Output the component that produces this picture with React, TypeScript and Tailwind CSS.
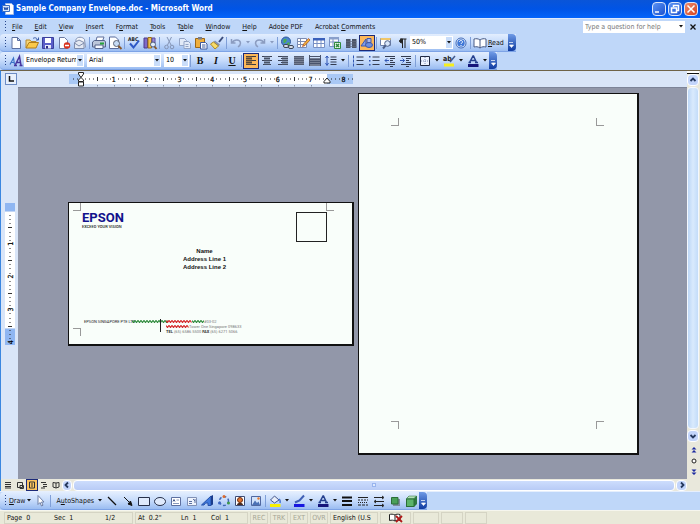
import React from 'react';

const glyphs: Record<string, React.ReactNode> = {
  new: <path d="M4 2.500h5.500l3 3v8H4z M9.500 2.500v3h3" fill="#fff" stroke="#5d70a0" />,
  open: (
    <>
      <path d="M2 13V5h4l1 1.500h5V8" fill="#f6d67a" stroke="#b98a2c" />
      <path d="M2 13l3-5.500h9.500L12 13z" fill="#fbc94a" stroke="#b07d1c" />
      <path d="M9 3.500c2-1.500 4-.5 4.500 1.500M12 5h2.500V2.500" fill="none" stroke="#3c5da8" />
    </>
  ),
  save: (
    <>
      <path d="M2.500 2.500h11v11h-11z" fill="#5a5fc8" stroke="#3a3f9c" />
      <path d="M5 3h6v5H5z" fill="#fff" />
      <path d="M5 10h6v3.500H5z" fill="#e7e9f8" />
      <path d="M6 11h2v2.500H6z" fill="#2a2f86" />
    </>
  ),
  permission: (
    <>
      <path d="M3.500 2.500h5l3 3v8h-8z" fill="#fff" stroke="#6c7ba5" />
      <circle cx="11" cy="10.500" r="3.200" fill="#d9321d" />
      <path d="M9 10.500h4" stroke="#fff" strokeWidth="1.500" />
    </>
  ),
  mail: (
    <>
      <path d="M4 7V4.500c1-3 7-3 8.500 0l1 8" fill="#f4f6fb" stroke="#8593b2" />
      <path d="M2.500 7.500l4.500-2.500 5 2.500v6H2.500z" fill="#e3e8f2" stroke="#7e8cac" />
      <path d="M2.500 8l4.500 3L12 8" fill="none" stroke="#7e8cac" />
    </>
  ),
  print: (
    <>
      <path d="M5 6l1-4h7l-1.500 4" fill="#fff" stroke="#60709c" />
      <path d="M1.500 7l2-1.500h10L14.500 7v5H1.500z" fill="#bcc6da" stroke="#55638a" />
      <path d="M4 10h8v3.500H4z" fill="#f4f7ff" stroke="#55638a" />
      <path d="M9 8.500h4" stroke="#28a53b" strokeWidth="2" />
    </>
  ),
  preview: (
    <>
      <path d="M2.500 2h6l3 3v8.500h-9z" fill="#fff" stroke="#5b6c9c" />
      <circle cx="9.500" cy="8.500" r="3" fill="#c7dcf6" stroke="#5d6474" />
      <path d="M11.500 11l3 3" stroke="#8a5a2c" strokeWidth="2" />
    </>
  ),
  spelling: (
    <>
      <text x="2" y="5.500" fontSize="5" fontWeight="bold" fill="#222">ABC</text>
      <path d="M4 8.500l3.500 4 5.500-7" fill="none" stroke="#2d58c6" strokeWidth="2" />
    </>
  ),
  research: (
    <>
      <path d="M2 3h3.500v10H2z" fill="#7f6ac8" stroke="#4a3b8c" />
      <path d="M6 2.500h3.500V13H6z" fill="#f2c14a" stroke="#9c6f1c" />
      <path d="M10 3h3v5h-3z" fill="#9a8ad8" stroke="#5a4b9c" />
      <circle cx="11" cy="9.500" r="2.500" fill="#e0ecfb" stroke="#4d5c7c" />
      <path d="M12.500 11.500l2 2.500" stroke="#8a5a2c" strokeWidth="2" />
    </>
  ),
  cut: (
    <g stroke="#8494b5" fill="none">
      <path d="M6 2l4 8M10.500 2l-4 8" />
      <circle cx="5.500" cy="12" r="1.800" />
      <circle cx="11" cy="12" r="1.800" />
    </g>
  ),
  copy: (
    <g stroke="#93a4c6" fill="#e2eaf8">
      <path d="M2.500 3.500h5l2 2v5h-7z" />
      <path d="M7 6.500h4.500l2 2v5H7z M8.500 9.500h3M8.500 11.500h3" />
    </g>
  ),
  paste: (
    <>
      <path d="M2.500 3.500h9v9h-9z" fill="#efae3c" stroke="#9a6616" />
      <path d="M5 2h4v2.500H5z" fill="#777f90" />
      <path d="M7.500 7.500h5l1.500 1.500v5H7.500z" fill="#fff" stroke="#3f5a9e" />
      <path d="M9 10h3.500M9 12h3.500" stroke="#3f5a9e" />
    </>
  ),
  brush: (
    <>
      <path d="M14 2l-4 5" stroke="#3b4d7c" strokeWidth="2" />
      <path d="M6 5.500l5 4-1.500 2-5.500-4z" fill="#8491b0" />
      <path d="M4.500 7l5 4L6 14 1.500 9z" fill="#f7dc6a" stroke="#b08c25" />
    </>
  ),
  undo: <path d="M3.500 4v4h4M4 8c2-4 8-4 8.500 0 0 2-1 3-2.500 4" fill="none" stroke="#8b9cc0" strokeWidth="1.500" />,
  redo: <path d="M12.500 4v4h-4M12 8c-2-4-8-4-8.500 0 0 2 1 3 2.500 4" fill="none" stroke="#8b9cc0" strokeWidth="1.500" />,
  link: (
    <>
      <circle cx="7" cy="6.500" r="4.500" fill="#4b86cf" stroke="#2f5a9c" />
      <path d="M4.500 4.500c2-2 4 0 3 1.500s-1 2-3 2zM8 8l2.500-1v3L8 11z" fill="#4cae50" />
      <rect x="4.500" y="9.500" width="5" height="3" rx="1.500" fill="#d5dbe6" stroke="#3c4657" />
      <rect x="9.500" y="10.500" width="5" height="3" rx="1.500" fill="#d5dbe6" stroke="#3c4657" />
    </>
  ),
  borders: (
    <>
      <path d="M2.500 3.500h9v9h-9z M2.500 6.500h9M2.500 9.500h9M5.500 3.500v9" fill="#fff" stroke="#7d8cb2" />
      <path d="M13.500 3.500l-5 5.500-1 2.500 2.500-1L15 5z" fill="#f0b53c" stroke="#a8421c" strokeWidth=".7" />
    </>
  ),
  table: (
    <>
      <path d="M2.500 3.500h11v9h-11z M6 5v7.500M10 5v7.500M2.500 8.500h11" fill="#fff" stroke="#7890c4" />
      <path d="M2 3h12v2.500H2z" fill="#3a60bb" />
    </>
  ),
  excel: (
    <>
      <path d="M2.500 2.500h9v9h-9z M2.500 7h9M6 4v7" fill="#fff" stroke="#7890c4" />
      <path d="M2 2h10v2.500H2z" fill="#8aa0cb" />
      <path d="M7.500 7.500h6v6h-6z" fill="#e5f4e6" stroke="#2f8a3c" />
      <path d="M9 9l3 3M12 9l-3 3" stroke="#2f8a3c" strokeWidth="1.500" />
    </>
  ),
  columns: (
    <>
      <path d="M3 4h4.500v9H3zM9 4h4.500v9H9z" fill="#4d5567" />
      <path d="M3 6.500h10.500M3 9h10.500M3 11.500h10.500" stroke="#666e81" strokeWidth=".7" />
    </>
  ),
  drawing: (
    <>
      <path d="M2 11l5-7v7z" fill="#7f9ce8" stroke="#3f57ab" />
      <path d="M8 3.500h4v4H8z" fill="#aab8e8" stroke="#3f57ab" />
      <ellipse cx="10" cy="10" rx="3.500" ry="2.500" fill="#6d8fe0" stroke="#3f57ab" />
    </>
  ),
  map: (
    <>
      <path d="M2.500 3.500h10v7h-10z" fill="#fff" stroke="#6d80ab" />
      <path d="M2.500 3h10v2h-10z" fill="#f0c668" />
      <circle cx="9.500" cy="8.500" r="2.800" fill="#d8e6fa" stroke="#4d5f88" />
      <path d="M7.500 10.500L5 13.500" stroke="#4d5f88" strokeWidth="2" />
    </>
  ),
  pilcrow: <path d="M6 4h6.500M8.500 4v9M11 4v9M8.500 4c-4 0-4 4 0 4z" fill="#222" stroke="#222" />,
  help: (
    <>
      <circle cx="8" cy="8" r="5" fill="#fff" stroke="#3a66b8" />
      <circle cx="8" cy="8" r="3.800" fill="#3f78d8" />
      <path d="M6.500 7c0-2 3-2 3 0 0 1-1.500 1-1.500 2M8 10v1" fill="none" stroke="#fff" />
    </>
  ),
  book: <path d="M8 5C6 3.500 4 3.500 2 4v8c2-.5 4-.5 6 1 2-1.500 4-1.500 6-1V4c-2-.5-4-.5-6 1v8" fill="#fff" stroke="#485a85" />,
  styles: (
    <>
      <path d="M2 11.500L5.500 5l1 6.500M3.500 9.500h3" fill="none" stroke="#3a72c8" strokeWidth="1.200" />
      <path d="M7 12.500L11.500 3.500l1.500 9M8.500 9.500h4M6 12.500h3M11.500 12.500h3" fill="none" stroke="#46359e" strokeWidth="1.500" />
    </>
  ),
  left: (
    <>
      <path d="M3 3.500h10M3 5.500h6M3 7.500h10M3 9.500h6M3 11.500h10" stroke="#3b3b42" />
      <path d="M3 3h6v9H3z" fill="#6d5337" fillOpacity=".6" />
    </>
  ),
  center: (
    <>
      <path d="M3 3.500h10M5 5.500h6M3 7.500h10M5 9.500h6M4 11.500h8" stroke="#3b4358" />
      <path d="M5 3h6v9H5z" fill="#566074" fillOpacity=".55" />
    </>
  ),
  right: (
    <>
      <path d="M3 3.500h10M6 5.500h7M3 7.500h10M6 9.500h7M3 11.500h10" stroke="#3b4358" />
      <path d="M7 3h6v9H7z" fill="#566074" fillOpacity=".55" />
    </>
  ),
  justify: (
    <>
      <path d="M3 3h10v9H3z" fill="#767f93" />
      <path d="M3 3.500h10M3 5.500h10M3 7.500h10M3 9.500h10M3 11.500h10" stroke="#545d72" />
    </>
  ),
  distribute: (
    <>
      <path d="M3 5h10v8H3z" fill="#767f93" />
      <path d="M2.500 2v11M13.500 2v11M3 3.500h10M3 6.500h10M3 8.500h10M3 10.500h10" stroke="#4a546c" />
    </>
  ),
  spacing: (
    <>
      <path d="M7.500 4h6M7.500 6.500h6M7.500 9h6M7.500 11.500h6" stroke="#333b50" />
      <path d="M4 3v9M2.500 5L4 3l1.500 2M2.500 10L4 12.500 5.500 10" fill="none" stroke="#3157b5" />
    </>
  ),
  numbers: (
    <>
      <path d="M6.500 4h7M6.500 7.500h7M6.500 11.500h7" stroke="#333b50" />
      <path d="M3.500 2.500v3M3.500 6.500v3M3.500 10.500v3" fill="none" stroke="#3157b5" />
    </>
  ),
  bullets: (
    <>
      <path d="M6.500 4h7M6.500 7.500h7M6.500 11.500h7" stroke="#333b50" />
      <path d="M3 3h1.500v1.500H3zM3 7h1.500v1.500H3zM3 11h1.500v1.500H3z" fill="#3157b5" />
    </>
  ),
  outdent: (
    <>
      <path d="M3 3.500h10M8 5.500h5M8 7.500h3M8 9.500h5M3 11.500h10M8 13.500h3" stroke="#333b50" />
      <path d="M7 7.500H3M5 5.500l-2 2 2 2" fill="none" stroke="#3157b5" />
    </>
  ),
  indent: (
    <>
      <path d="M3 3.500h10M8 5.500h5M8 7.500h3M8 9.500h5M3 11.500h10M8 13.500h3" stroke="#333b50" />
      <path d="M2 7.500h4.500M4.500 5.500l2 2-2 2" fill="none" stroke="#3157b5" />
    </>
  ),
  outside: (
    <>
      <path d="M3.500 3.500h9v9h-9z" fill="#eef4ff" stroke="#222b44" />
      <path d="M8 4v8M4 8h8" stroke="#7c8cb4" strokeDasharray="1 1" />
    </>
  ),
  highlight: (
    <>
      <text x="2" y="8" fontSize="7" fontWeight="bold" fill="#222">ab</text>
      <path d="M14 3l-5 6" stroke="#44598c" strokeWidth="1.500" />
      <path d="M3 10.500h10v3H3z" fill="#f6ee1d" />
    </>
  ),
  fontcolor: (
    <>
      <path d="M4.500 9.500L8 3h.5L11.500 9.500M6 7.500h4M3.500 9.500h2.500M10 9.500h3" fill="none" stroke="#26418f" strokeWidth="1.500" />
      <path d="M3 11h10.500v3H3z" fill="#15157a" />
    </>
  ),
  pointer: <path d="M5 2.500v9l2-2 1.500 3.500 1.500-.8L8.500 9H11z" fill="#fff" stroke="#6f80a6" />,
  line: <path d="M4 4l8 8" stroke="#111" strokeWidth="1.200" />,
  arrow: <path d="M4 4l5 5M12 12.500L8 11l2.500-3z" fill="#111" stroke="#111" />,
  rect: <path d="M2.500 4.500h11v8h-11z" fill="#dfeafc" stroke="#27304a" />,
  oval: <ellipse cx="8" cy="8.500" rx="5.500" ry="4" fill="#dfeafc" stroke="#27304a" />,
  textbox: (
    <>
      <path d="M3.500 4.500h9v8h-9z" fill="#fff" stroke="#5d70a0" />
      <path d="M5 8.500l1-2 1 2" fill="none" stroke="#44598c" />
      <path d="M8.500 7h2.500M5 10.500h6" stroke="#8797bb" />
    </>
  ),
  vtext: (
    <>
      <path d="M3.500 4.500h9v8h-9z" fill="#eef3fc" stroke="#8090b4" />
      <path d="M5 10.500h3M5 8.500h3M9 6l2 2M11 6v4" stroke="#5d70a0" />
    </>
  ),
  wordart: (
    <>
      <path d="M1.500 12L11 3v9.500H8V10H5.500L4 12z" fill="#3f79dd" stroke="#2450a8" />
      <path d="M11 3l2-1v9.500l-2 1z" fill="#1b3d8c" />
    </>
  ),
  diagram: (
    <>
      <circle cx="8" cy="8" r="4.500" fill="none" stroke="#4268b4" strokeWidth="1.500" strokeDasharray="3 2" />
      <circle cx="8" cy="3.500" r="1.500" fill="#de6b2c" />
      <circle cx="3.500" cy="10" r="1.500" fill="#3f66c2" />
      <circle cx="12.500" cy="10" r="1.500" fill="#3f9a4a" />
    </>
  ),
  clipart: (
    <>
      <path d="M3.500 3.500h9v9h-9z" fill="#fff" stroke="#3c4b74" />
      <circle cx="8" cy="7" r="2.500" fill="#e2742e" stroke="#6e2d14" />
      <path d="M5 12c0-3 6-3 6 0z" fill="#4a2c22" />
    </>
  ),
  picture: (
    <>
      <path d="M3.500 3.500h9v9h-9z" fill="#d2e3fb" stroke="#5068a0" />
      <path d="M4 12l3-4.500 2 2.500 1.500-1.500L12 12z" fill="#4c72b6" />
      <circle cx="10.500" cy="5.500" r="1.200" fill="#e87d30" />
    </>
  ),
  fill: (
    <>
      <path d="M3.500 7l4-4L12 7l-4.500 3z" fill="#e7edf8" stroke="#46588c" />
      <path d="M12 6c1.500 1 1.500 2 1 4" fill="none" stroke="#4878d2" strokeWidth="1.500" />
      <path d="M3 11h10.500v3H3z" fill="#f8f000" />
    </>
  ),
  stroke: (
    <>
      <path d="M13 2.500L8.500 7.500 4 9.500" fill="none" stroke="#3f5fb5" strokeWidth="2" />
      <path d="M3 11h10.500v3H3z" fill="#1616e0" />
    </>
  ),
  weight: <path d="M3 4.500h10M3 8h10M3 12h10" stroke="#111" strokeWidth="2" />,
  dash: (
    <g stroke="#222">
      <path d="M3 4.500h10" />
      <path d="M3 7h10" strokeDasharray="2 1" />
      <path d="M3 9.500h10" strokeDasharray="1 1" />
      <path d="M3 12h10" strokeDasharray="3 1" />
    </g>
  ),
  arrows: <path d="M3 4.500h9M4 8.500h9M3 12.500h9M11 3l2 1.500L11 6M5 7L3 8.500 5 10M11 11l2 1.500-2 1.500" fill="none" stroke="#222" />,
  shadow: (
    <>
      <path d="M6 6h7v7H6z" fill="#7e8ba0" />
      <path d="M4.500 4.500h6.500v6.500H4.500z" fill="#4aa05a" stroke="#2a6e38" />
    </>
  ),
  cube: (
    <>
      <path d="M3 6l3-3h8v8l-3 3H3z" fill="#2f7a40" />
      <path d="M3.500 6h7.500v7.500H3.500z" fill="#5cb46b" stroke="#2a6e38" />
      <path d="M3.500 5.500L6 3h7.500L11 5.500z" fill="#b2e0b8" stroke="#2a6e38" strokeWidth=".5" />
    </>
  ),
};

function Icon({ name }: { name: string }) {
  return (
    <svg viewBox="0 0 16 16" className="w-4 h-4 shrink-0" fill="none" aria-hidden="true">
      {glyphs[name]}
    </svg>
  );
}

function Tool({ name, active }: { name: string; active?: boolean }) {
  return (
    <button
      aria-label={name}
      className={
        active
          ? 'w-4 h-4 shrink-0 bg-[#fdb859] outline outline-1 -outline-offset-1 outline-[#1c2a78]'
          : 'w-4 h-4 shrink-0 hover:bg-[#ffe7b0]'
      }
    >
      <Icon name={name} />
    </button>
  );
}

function Caret({ label, dim }: { label: string; dim?: boolean }) {
  return (
    <button aria-label={label} className="w-2 h-4 shrink-0 flex items-center justify-center">
      <svg viewBox="0 0 4 3" className="w-1 h-[3px]" aria-hidden="true">
        <path d="M0 0h4L2 2.500z" fill={dim ? '#8b9cc0' : '#111'} />
      </svg>
    </button>
  );
}

const Sep = () => <span className="w-px h-3 mx-px shrink-0 bg-[#7f9fd8]" />;

const Grip = () => (
  <span className="w-px h-3 ml-[5px] mr-[2px] shrink-0 bg-[repeating-linear-gradient(#27458a_0_1px,transparent_1px_3px)]" />
);

function Cap({ label }: { label: string }) {
  return (
    <button
      aria-label={label}
      className="self-stretch w-2 shrink-0 rounded-r-sm bg-linear-to-b from-[#6f9ae6] to-[#0f3aa0] flex items-end justify-center pb-[3px]"
    >
      <svg viewBox="0 0 5 6" className="w-[5px] h-[6px]" aria-hidden="true">
        <path d="M0 .5h4M.5 3h4L2.500 5.500z" fill="#fff" stroke="#fff" strokeWidth=".7" />
      </svg>
    </button>
  );
}

function Combo({ label, options, className }: { label: string; options: string[]; className: string }) {
  return (
    <div className={`relative h-[13px] shrink-0 bg-white ${className}`}>
      <select aria-label={label} className="appearance-none w-full h-full pl-[2px] pr-2 text-[7px] leading-[13px] text-black bg-transparent block">
        {options.map((o) => (
          <option key={o}>{o}</option>
        ))}
      </select>
      <span className="absolute right-px top-px bottom-px w-[6px] bg-[#c9ddfa] flex items-center justify-center pointer-events-none">
        <svg viewBox="0 0 4 3" className="w-1 h-[3px]" aria-hidden="true">
          <path d="M0 0h4L2 2.500z" fill="#111" />
        </svg>
      </span>
    </div>
  );
}

const menus = [
  ['', 'F', 'ile'], ['', 'E', 'dit'], ['', 'V', 'iew'], ['', 'I', 'nsert'], ['F', 'o', 'rmat'], ['', 'T', 'ools'],
  ['T', 'a', 'ble'], ['', 'W', 'indow'], ['', 'H', 'elp'], ['Ado', 'b', 'e PDF'], ['Acrobat ', 'C', 'omments'],
];

const bar = 'flex items-center rounded-l-sm border-b border-[#7da3e6] bg-linear-to-b from-[#e3eefe] via-[#c6dbfb] to-[#9bbdf1]';

function HorizontalRuler() {
  const eighths = Array.from({ length: 69 }, (_, i) => i - 2);
  return (
    <svg viewBox="0 0 284 16" className="w-[284px] h-4 shrink-0" aria-hidden="true">
      <path d="M0 3h284v10H0z" fill="#a9c8f5" />
      <path d="M12 3h246v10H12z" fill="#fff" />
      {eighths.map((i) => {
        const x = 12 + i * 4.1;
        if (i === 0 || i === 60) return null;
        if (i > 0 && i % 8 === 0) {
          return (
            <text key={i} x={x} y="10.500" fontSize="7" textAnchor="middle" fill="#000" stroke="#000" strokeWidth=".2">
              {i / 8}
            </text>
          );
        }
        if (i > 0 && i % 4 === 0) return <path key={i} d={`M${Math.round(x) + 0.5} 6v4`} stroke="#333" />;
        return <path key={i} d={`M${Math.round(x)} 8h1`} stroke="#222" />;
      })}
      {Array.from({ length: 14 }, (_, i) => (
        <path key={i} d={`M${Math.round(28.4 + i * 16.4) + 0.5} 14v1.500`} stroke="#8a94a8" />
      ))}
      <path d="M9.500 1.500h5v1.500L12 6.500 9.500 3zM12 6.500l2.500 2.500v1.500h-5V9zM9.500 11h5v4h-5z" fill="#fff" stroke="#222" />
      <path d="M258 7l3 3.500v1.500h-6v-1.500z" fill="#fff" stroke="#222" />
    </svg>
  );
}

function VerticalRuler() {
  return (
    <svg viewBox="0 0 10 142" className="w-[10px] h-[142px]" aria-hidden="true">
      <path d="M0 0h10v142H0z" fill="#8fb6f2" />
      <path d="M0 8h10v117H0z" fill="#fff" />
      {Array.from({ length: 33 }, (_, k) => {
        const i = k + 1;
        const y = 8 + i * 4.1;
        if (i % 8 === 0) {
          return (
            <text key={i} transform={`translate(7.500 ${y}) rotate(-90)`} fontSize="7" textAnchor="middle" fill="#000" stroke="#000" strokeWidth=".2">
              {i / 8}
            </text>
          );
        }
        if (i % 4 === 0) return <path key={i} d={`M3 ${Math.round(y) + 0.5}h4`} stroke="#333" />;
        return <path key={i} d={`M5 ${Math.round(y)}v1`} stroke="#222" />;
      })}
      <path d="M0 8.500h10M0 125.500h10" stroke="#c3d6f4" />
    </svg>
  );
}

function Squiggle({ width, color }: { width: number; color: string }) {
  const points = Array.from({ length: Math.floor(width / 1.5) + 1 }, (_, i) => `${i * 1.5},${i % 2 ? 2.5 : 0.5}`).join(' ');
  return (
    <svg viewBox={`0 0 ${width} 3`} style={{ width }} className="h-[3px] shrink-0" aria-hidden="true">
      <polyline points={points} fill="none" stroke={color} strokeWidth="1.200" />
    </svg>
  );
}

function Envelope() {
  return (
    <section className="relative w-[286px] h-[144px] bg-[#f9fefa] border border-r-2 border-b-2 border-[#111] px-[13px] pt-2 flex flex-col font-['Roboto',sans-serif]">
      <span className="absolute left-1 top-0 w-2 h-2 border-r border-b border-[#999]" />
      <span className="absolute right-[18px] top-0 w-2 h-2 border-l border-b border-[#999]" />
      <span className="absolute left-1 bottom-2 w-2 h-2 border-r border-t border-[#999]" />
      <span className="absolute right-[25px] top-[9px] w-[31px] h-[30px] border border-[#222]" />
      <h1 className="text-[13px] leading-[14px] font-bold text-[#12128c]">EPSON</h1>
      <p className="text-[4px] leading-[4px] font-medium text-[#222]">EXCEED YOUR VISION</p>
      <address className="not-italic mt-[18px] pr-3 text-center font-['Liberation_Sans',sans-serif] text-[6px] leading-[8px] font-bold text-[#111]">
        Name<br />Address Line 1<br />Address Line 2
      </address>
      <footer className="mt-12 pl-[2px] flex items-start text-[4px] leading-[5px] text-[#777]">
        <span className="w-12 whitespace-nowrap text-[#222]">EPSON SINGAPORE PTE LTD</span>
        <span className="w-7 pt-px">
          <Squiggle width={36} color="#2f8a3c" />
        </span>
        <span className="w-px h-[13px] bg-[#222]" />
        <div className="pl-[5px] whitespace-nowrap">
          <div className="flex items-center">
            <Squiggle width={26} color="#d42a2a" />
            <Squiggle width={12} color="#2f8a3c" />
            #03-02
          </div>
          <div className="flex items-center">
            <Squiggle width={23} color="#d42a2a" />
            Tower One Singapore 098633
          </div>
          <div><b className="text-[#333]">TEL</b> (65) 6586 5500 <b className="text-[#333]">FAX</b> (65) 6271 5066</div>
        </div>
      </footer>
    </section>
  );
}

function LetterPage() {
  return (
    <section className="w-[281px] h-[362px] bg-[#f9fefa] border border-r-2 border-b-2 border-[#111] pl-8 pr-[33px] py-6 flex flex-col justify-between">
      <div className="flex justify-between">
        <span className="w-2 h-2 border-r border-b border-[#999]" />
        <span className="w-2 h-2 border-l border-b border-[#999]" />
      </div>
      <div className="flex justify-between">
        <span className="w-2 h-2 border-r border-t border-[#999]" />
        <span className="w-2 h-2 border-l border-t border-[#999]" />
      </div>
    </section>
  );
}

function ScrollButton({ label, d, className }: { label: string; d: string; className: string }) {
  return (
    <button aria-label={label} className={`shrink-0 rounded-sm border border-white bg-[#c3d5fb] flex items-center justify-center ${className}`}>
      <svg viewBox="0 0 8 8" className="w-2 h-2" aria-hidden="true">
        <path d={d} fill="none" stroke="#26395e" strokeWidth="1.800" />
      </svg>
    </button>
  );
}

function BrowseButton({ label, children }: { label: string; children: React.ReactNode }) {
  return (
    <button aria-label={label} className="h-[11px] w-full flex items-center justify-center">
      <svg viewBox="0 0 6 6" className="w-[6px] h-[6px]" aria-hidden="true">{children}</svg>
    </button>
  );
}

const views = [
  { label: 'Normal', d: 'M1 1.500h6M1 3.500h6M1 5.500h6M1 7h6' },
  { label: 'Web Layout', d: 'M1.500 1.500h5v5h-5zM4 4.500h3.500v3H4z' },
  { label: 'Print Layout', d: 'M1.500 1h5v6h-5zM3 3h2M3 5h2' },
  { label: 'Outline', d: 'M1 1.500h5M3 3.500h4M3 5.500h4M1 7h4' },
  { label: 'Reading', d: 'M4 2L1 1.500v4.500L4 7l3-1V1.500zM4 2v5' },
];

function WindowButton({ label, d, className }: { label: string; d: string; className: string }) {
  return (
    <button aria-label={label} className={`w-[14px] h-[14px] rounded-sm border border-[#dbe6fb] bg-linear-to-br ${className}`}>
      <svg viewBox="0 0 12 12" className="w-3 h-3" aria-hidden="true">
        <path d={d} fill="none" stroke="#fff" strokeWidth="1.500" />
      </svg>
    </button>
  );
}

export default function App() {
  return (
    <div className="h-screen flex flex-col overflow-hidden bg-[#bfd7f9] font-['DejaVu_Sans_Condensed','DejaVu_Sans',sans-serif] text-[7px] leading-[10px] text-[#111]">
      <header className="h-[18px] shrink-0 flex items-center pl-[2px] pr-[2px] bg-linear-to-b from-[#0a55d8] via-[#0054e6] to-[#0464fb]">
        <svg viewBox="0 0 12 12" className="w-3 h-3 mr-[2px]" aria-hidden="true">
          <path d="M3.500.5h6l2 2v9h-8z" fill="#fff" stroke="#9fb8e6" />
          <path d="M.5 2.500h7v6h-7z" fill="#dce9fc" stroke="#3b6fc4" />
          <path d="M2 4l1 3 1-2.500L5 7l1-3" fill="none" stroke="#2450a8" />
        </svg>
        <h1 className="flex-1 text-[8px] font-bold text-white whitespace-nowrap">
          Sample Company Envelope.doc - Microsoft Word
        </h1>
        <div className="flex gap-[2px]">
          <WindowButton label="Minimize" d="M2 9h4" className="from-[#5b93f5] to-[#1c50cf]" />
          <WindowButton label="Restore" d="M4.500 4V2.500h5v5H8M2.500 5h5v4.500h-5z" className="from-[#5b93f5] to-[#1c50cf]" />
          <WindowButton label="Close" d="M2.500 2.500l7 7M9.500 2.500l-7 7" className="from-[#f08a6a] to-[#d4401c]" />
        </div>
      </header>

      <nav className="h-4 shrink-0 flex items-center border-t border-[#dfeafc]">
        <Grip />
        <div className="flex-1 flex gap-3 pl-1 whitespace-nowrap">
          {menus.map(([a, b, c]) => (
            <button key={a + b + c}>{a}<u>{b}</u>{c}</button>
          ))}
        </div>
        <div className="flex items-center bg-white h-3 w-[102px]">
          <input aria-label="Type a question for help" placeholder="Type a question for help" className="w-full min-w-0 pl-[2px] placeholder:text-[#777] outline-none" />
          <Caret label="Help history" />
        </div>
        <button aria-label="Close document" className="w-[15px] flex justify-center">
          <svg viewBox="0 0 6 6" className="w-[6px] h-[6px]" aria-hidden="true">
            <path d="M.5.5l5 5M5.500.5l-5 5" stroke="#111" strokeWidth="1.300" />
          </svg>
        </button>
      </nav>

      <div className="h-[18px] shrink-0 flex">
        <div className={bar}>
          <Grip />
          {['new', 'open', 'save', 'permission', 'mail'].map((n) => <Tool key={n} name={n} />)}
          <Sep />
          <Tool name="print" />
          <Tool name="preview" />
          <Sep />
          <Tool name="spelling" />
          <Tool name="research" />
          <Sep />
          {['cut', 'copy', 'paste', 'brush'].map((n) => <Tool key={n} name={n} />)}
          <Sep />
          <Tool name="undo" />
          <Caret label="Undo list" dim />
          <Tool name="redo" />
          <Caret label="Redo list" dim />
          <Sep />
          {['link', 'borders', 'table', 'excel', 'columns'].map((n) => <Tool key={n} name={n} />)}
          <Tool name="drawing" active />
          <Sep />
          <Tool name="map" />
          <Tool name="pilcrow" />
          <Combo label="Zoom" options={['50%', '75%', '100%']} className="w-[43px]" />
          <Tool name="help" />
          <Sep />
          <button className="flex items-center pr-1">
            <Icon name="book" />
            <span><u>R</u>ead</span>
          </button>
          <Cap label="Standard toolbar options" />
        </div>
      </div>

      <div className="h-[18px] shrink-0 flex">
        <div className={bar}>
          <Grip />
          <Tool name="styles" />
          <Combo label="Style" options={['Envelope Return', 'Normal']} className="w-[60px] mr-[3px]" />
          <Combo label="Font" options={['Arial', 'Times New Roman']} className="w-[74px] mr-[3px]" />
          <Combo label="Font size" options={['10', '12', '14']} className="w-[25px]" />
          <Sep />
          <button className="w-4 font-['Liberation_Serif',serif] text-[10px] font-bold">B</button>
          <button className="w-4 font-['Liberation_Serif',serif] text-[10px] font-bold italic">I</button>
          <button className="w-4 font-['Liberation_Serif',serif] text-[10px] font-bold underline">U</button>
          <Sep />
          <Tool name="left" active />
          {['center', 'right', 'justify', 'distribute', 'spacing'].map((n) => <Tool key={n} name={n} />)}
          <Caret label="Line spacing list" />
          <Sep />
          {['numbers', 'bullets', 'outdent', 'indent'].map((n) => <Tool key={n} name={n} />)}
          <Sep />
          <Tool name="outside" />
          <Caret label="Border list" />
          <Tool name="highlight" />
          <Caret label="Highlight list" />
          <Tool name="fontcolor" />
          <Caret label="Font color list" />
          <Cap label="Formatting toolbar options" />
        </div>
      </div>

      <main className="flex-1 min-h-0 flex border-l border-t border-l-[#3a86e0] border-t-[#6f6348]">
        <div className="flex-1 min-w-0 flex flex-col">
          <div className="h-4 shrink-0 flex items-center bg-[#d9e5f8]">
            <button aria-label="Left tab" className="ml-1 mr-[52px] w-3 h-3 border border-[#6d8cc4] bg-[#e9f1fd] flex items-center justify-center">
              <svg viewBox="0 0 6 6" className="w-[6px] h-[6px]" aria-hidden="true">
                <path d="M1.500 0v5H6" fill="none" stroke="#111" strokeWidth="1.500" />
              </svg>
            </button>
            <HorizontalRuler />
          </div>
          <div className="flex-1 min-h-0 flex">
            <div className="w-[17px] shrink-0 pl-1 pt-[116px] bg-[#d9e5f8]">
              <VerticalRuler />
            </div>
            <div className="flex-1 min-w-0 overflow-hidden bg-[#9297a9] border-t border-[#7d8498] pl-[50px] pt-[5px] flex items-start">
              <div className="flex items-center gap-1">
                <Envelope />
                <LetterPage />
              </div>
            </div>
          </div>
          <div className="h-3 shrink-0 flex items-center bg-[#e9e8dc]">
            <div className="flex pl-px">
              {views.map((v) => (
                <button
                  key={v.label}
                  aria-label={v.label}
                  className={
                    v.label === 'Print Layout'
                      ? 'w-3 h-3 flex items-center justify-center bg-[#fdc35f] border border-[#1c2a78]'
                      : 'w-3 h-3 flex items-center justify-center'
                  }
                >
                  <svg viewBox="0 0 8 8" className="w-2 h-2 shrink-0" aria-hidden="true">
                    <path d={v.d} fill="none" stroke="#333" />
                  </svg>
                </button>
              ))}
            </div>
            <ScrollButton label="Scroll left" d="M5 1.500L2.500 4 5 6.500" className="w-[10px] h-[11px]" />
            <div className="flex-1 h-[11px] mx-px rounded-sm border border-white bg-linear-to-b from-[#cdddfd] to-[#b8cbf6] flex items-center justify-center">
              <span className="w-1 h-1 border border-[#98b4ee] bg-[#dfe9fd]" />
            </div>
            <ScrollButton label="Scroll right" d="M3 1.500L5.500 4 3 6.500" className="w-[11px] h-[11px]" />
          </div>
        </div>
        <div className="w-[13px] shrink-0 flex flex-col bg-[#e9e8dc]">
          <span className="h-[3px] mr-px bg-white border-b border-[#111]" />
          <ScrollButton label="Scroll up" d="M1.500 5L4 2.500 6.500 5" className="w-3 h-3" />
          <div className="flex-1 my-px mr-px rounded-sm border border-[#f4f8fe] bg-linear-to-r from-[#bcd6f6] via-[#d9eafd] to-[#c3dcf9]" />
          <ScrollButton label="Scroll down" d="M1.500 3L4 5.500 6.500 3" className="w-3 h-3" />
          <div className="pt-[2px] pb-[14px]">
            <BrowseButton label="Previous page">
              <path d="M3 0l2.500 2.500h-5zM3 3l2.500 2.500h-5z" fill="#1c2aa0" />
            </BrowseButton>
            <BrowseButton label="Select browse object">
              <circle cx="3" cy="3" r="2" fill="#fff" stroke="#222" />
            </BrowseButton>
            <BrowseButton label="Next page">
              <path d="M.5.5h5L3 3zM.5 3.500h5L3 6z" fill="#1c2aa0" />
            </BrowseButton>
          </div>
        </div>
      </main>

      <div className="h-[19px] shrink-0 flex border-t border-[#e6effd]">
        <div className={bar}>
          <Grip />
          <button className="pl-px"><u>D</u>raw</button>
          <Caret label="Draw menu" />
          <Tool name="pointer" />
          <Sep />
          <button className="pl-1 pr-[2px]">A<u>u</u>toShapes</button>
          <Caret label="AutoShapes menu" />
          {['line', 'arrow', 'rect', 'oval', 'textbox', 'vtext', 'wordart', 'diagram', 'clipart', 'picture'].map((n) => (
            <Tool key={n} name={n} />
          ))}
          <Sep />
          <Tool name="fill" />
          <Caret label="Fill color list" />
          <Tool name="stroke" />
          <Caret label="Line color list" />
          <Tool name="fontcolor" />
          <Caret label="Text color list" />
          {['weight', 'dash', 'arrows', 'shadow', 'cube'].map((n) => <Tool key={n} name={n} />)}
          <Cap label="Drawing toolbar options" />
        </div>
      </div>

      <footer className="h-[14px] shrink-0 flex items-center gap-[2px] pl-1 bg-[#e9e9d9] border-t border-[#f6f6ee] whitespace-nowrap">
        <div className="w-[129px] h-3 flex items-center border border-[#d5d4c4] pl-[2px]">
          <span className="w-[47px]">Page&nbsp; 0</span>
          <span className="w-[51px]">Sec&nbsp; 1</span>
          <span>1/2</span>
        </div>
        <div className="w-[113px] h-3 flex items-center border border-[#d5d4c4] pl-[2px]">
          <span className="w-[43px]">At&nbsp; 0.2"</span>
          <span className="w-[30px]">Ln&nbsp; 1</span>
          <span>Col&nbsp; 1</span>
        </div>
        {['REC', 'TRK', 'EXT', 'OVR'].map((m) => (
          <span key={m} className="w-[18px] h-3 flex items-center justify-center border border-[#d5d4c4] text-[#a5a595]">{m}</span>
        ))}
        <span className="w-[48px] h-3 flex items-center border border-[#d5d4c4] pl-[2px]">English (U.S</span>
        <span className="w-[31px] h-3 flex items-center justify-center border border-[#d5d4c4]">
          <svg viewBox="0 0 16 10" className="w-4 h-[10px]" aria-hidden="true">
            <path d="M7 2C5 1 3 1 1.500 1.500v6c2-.5 4-.5 5.500.5 1.500-1 3-1 5-.5v-6C10 1 8 1 7 2v6" fill="#fff" stroke="#222" />
            <path d="M8 3l6 6M14 3L8 9" stroke="#b01818" strokeWidth="1.800" />
          </svg>
        </span>
        <span className="w-[26px] h-3 border border-[#d5d4c4]" />
        <span className="w-[22px] h-3 border border-[#d5d4c4]" />
        <span className="w-[22px] h-3 border border-[#d5d4c4]" />
      </footer>
    </div>
  );
}
